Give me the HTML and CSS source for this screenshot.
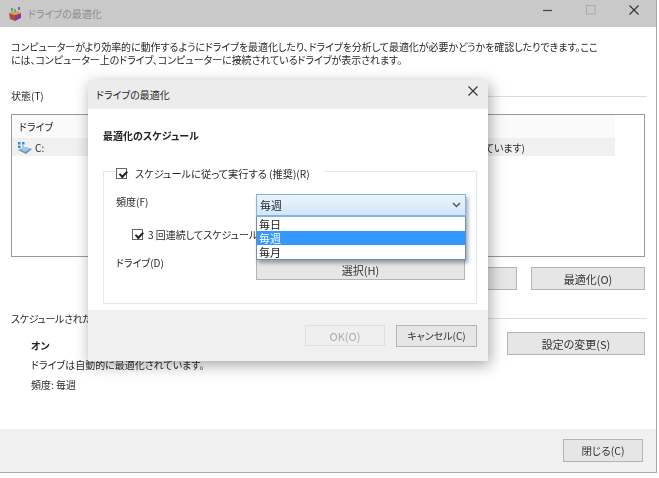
FILE: index.html
```html
<!DOCTYPE html>
<html lang="ja">
<head>
<meta charset="utf-8">
<title>ドライブの最適化</title>
<link rel="stylesheet" href="styles.css">
</head>
<body>
<div class="screen">
  <div class="window">
    <header class="titlebar">
      <svg class="app-icon" width="14" height="14" viewBox="0 0 14 14">
        <path d="M1 6l6 2v6l-5-2z" fill="#b5473c"/>
        <path d="M7 8l6-2v5l-6 3z" fill="#7a3f9a"/>
        <path d="M1 6l3-2 3 1 3-1 3 2-6 2z" fill="#d9a441"/>
        <rect x="3" y="1" width="2" height="3" fill="#4f9bd9"/>
        <rect x="6" y="2" width="2" height="3" fill="#6cb65a"/>
        <rect x="10" y="0" width="2" height="3" fill="#8a5cc0"/>
      </svg>
      <span class="title-text">ドライブの最適化</span>
      <div class="win-controls">
        <svg width="10" height="10" viewBox="0 0 10 10"><path d="M0 5.5h9" stroke="#444" stroke-width="1.2"/></svg>
        <svg width="10" height="10" viewBox="0 0 10 10"><rect x=".5" y=".5" width="8.5" height="8.5" fill="none" stroke="#aaa"/></svg>
        <svg width="10" height="10" viewBox="0 0 10 10"><path d="M.5.5l9 9M9.5.5l-9 9" stroke="#333" stroke-width="1.1"/></svg>
      </div>
    </header>
    <main class="content">
      <p class="intro">コンピューターがより効率的に動作するようにドライブを最適化したり、ドライブを分析して最適化が必要かどうかを確認したりできます。ここには、コンピューター上のドライブ、コンピューターに接続されているドライブが表示されます。</p>
      <div class="section-head status-head"><span>状態(T)</span><i class="rule"></i></div>
      <div class="listbox">
        <div class="list-row list-header"><span class="cell-name">ドライブ</span></div>
        <div class="list-row list-selected">
          <span class="cell-name drive-cell">
            <svg width="16" height="14" viewBox="0 0 16 14">
              <path d="M1 9l7-3 7 2-6 5z" fill="#6f94b8"/>
              <path d="M3 8l5-2 5 2-5 3z" fill="#a9c6df"/>
              <rect x="1" y="1" width="2.5" height="2.5" fill="#2f8fd8"/>
              <rect x="5" y="1" width="2.5" height="2.5" fill="#2f8fd8"/>
              <rect x="1" y="4.5" width="2.5" height="2.5" fill="#2f8fd8"/>
              <rect x="5" y="4.5" width="2" height="2" fill="#8ec3ea"/>
            </svg>
            C:
          </span>
          <span class="cell-status">OK (断片化 0% となっています)</span>
        </div>
      </div>
      <div class="button-row">
        <button class="btn btn-analyze" type="button">分析(A)</button>
        <button class="btn btn-optimize" type="button">最適化(O)</button>
      </div>
      <div class="section-head schedule-head"><span>スケジュールされた最適化</span><i class="rule"></i></div>
      <div class="schedule">
        <div class="schedule-info">
          <strong>オン</strong>
          <span>ドライブは自動的に最適化されています。</span>
          <span>頻度: 毎週</span>
        </div>
        <button class="btn btn-settings" type="button">設定の変更(S)</button>
      </div>
    </main>
    <footer class="footer">
      <button class="btn btn-close" type="button">閉じる(C)</button>
    </footer>
  </div>

  <section class="dialog">
    <header class="dialog-title">
      <span>ドライブの最適化</span>
      <svg width="10" height="10" viewBox="0 0 10 10"><path d="M.5.5l9 9M9.5.5l-9 9" stroke="#333" stroke-width="1.1"/></svg>
    </header>
    <div class="dialog-body">
      <h2 class="dialog-heading">最適化のスケジュール</h2>
      <div class="group">
        <label class="legend"><span class="check"></span>スケジュールに従って実行する (推奨)(R)</label>
        <div class="field-row freq-row"><span>頻度(F)</span></div>
        <label class="notify"><span class="check"></span>3 回連続してスケジュール</label>
        <div class="field-row drive-row"><span class="drive-label">ドライブ(D)</span><button class="btn btn-choose" type="button">選択(H)</button></div>
        <div class="select">
          <div class="select-box">毎週
            <svg width="9" height="6" viewBox="0 0 9 6"><path d="M1 1l3.5 3.5L8 1" fill="none" stroke="#556" stroke-width="1.5"/></svg>
          </div>
          <ul class="select-list">
            <li>毎日</li>
            <li class="active">毎週</li>
            <li>毎月</li>
          </ul>
        </div>
      </div>
    </div>
    <footer class="dialog-footer">
      <button class="btn btn-ok" type="button" disabled>OK(O)</button>
      <button class="btn btn-cancel" type="button">キャンセル(C)</button>
    </footer>
  </section>
</div>
</body>
</html>
```
FILE: styles.css
```css
* { box-sizing: border-box; }
html, body { margin: 0; padding: 0; background: #fff; }
body {
  width: 659px;
  height: 478px;
  overflow: hidden;
  font-family: "Noto Sans CJK JP", "Noto Sans", sans-serif;
  font-size: 10px;
  color: #282828;
  font-feature-settings: "palt";
}
.screen {
  position: relative;
  width: 659px;
  height: 478px;
  overflow: hidden;
  filter: blur(0.45px);
}
.window {
  display: flex;
  flex-direction: column;
  width: 657px;
  height: 473px;
  border-right: 1px solid #a8a8a8;
  border-bottom: 1px solid #a8a8a8;
}
.titlebar {
  display: flex;
  align-items: center;
  height: 27px;
  padding: 0 0 0 8px;
  background: #c9c9c9;
  flex: none;
}
.app-icon { flex: none; margin-right: 6px; }
.title-text { color: #8d8d8d; margin-top: -1px; }
.win-controls {
  margin-left: auto;
  display: flex;
  align-items: center;
  gap: 33px;
  padding-right: 17px;
  margin-top: -8px;
}
.content {
  flex: 1;
  display: flex;
  flex-direction: column;
  padding: 13px 9px 0 11px;
  min-height: 0;
}
.intro {
  margin: 0;
  width: 590px;
  line-height: 13px;
  letter-spacing: -0.05px;
}
.section-head {
  display: flex;
  align-items: center;
  gap: 6px;
}
.rule { flex: 1; height: 1px; background: #dcdcdc; margin-top: 3px; }
.status-head { margin-top: 22px; height: 14px; }
.status-head .rule { margin-left: 60px; }
.listbox {
  margin-top: 12px;
  margin-right: 2px;
  height: 143px;
  border: 1px solid #9a9a9a;
  flex: none;
}
.list-row {
  position: relative;
  display: flex;
  align-items: center;
  width: 603px;
}
.list-header { height: 23px; background: #fafafa; }
.list-selected { height: 18px; background: #f0f0f0; }
.cell-name { padding-left: 7px; }
.drive-cell { display: flex; align-items: center; gap: 2px; padding-left: 5px; padding-top: 1px; }
.cell-status { margin-left: auto; padding-right: 90px; padding-top: 1px; }
.btn {
  font: inherit;
  font-size: 11px;
  color: #333;
  background: #e6e6e6;
  border: 1px solid #b4b4b4;
  padding: 0;
  height: 23px;
}
.button-row {
  display: flex;
  justify-content: flex-end;
  gap: 14px;
  margin-top: 10px;
  padding-right: 2px;
}
.btn-analyze { width: 114px; }
.btn-optimize { width: 114px; }
.schedule-head { margin-top: 21px; height: 14px; letter-spacing: -0.35px; }
.schedule-head .rule { margin-top: 1px; }
.schedule {
  display: flex;
  align-items: flex-start;
  justify-content: space-between;
  padding-right: 2px;
}
.schedule-info {
  display: flex;
  flex-direction: column;
  padding: 14px 0 0 20px;
  line-height: 13px;
  gap: 7px;
}
.schedule-info strong { font-weight: 700; color: #222; margin-bottom: -1px; }
.btn-settings { width: 138px; margin-top: 7px; }
.footer {
  flex: none;
  height: 43px;
  display: flex;
  align-items: center;
  justify-content: flex-end;
  padding-right: 13px;
  background: #f0f0f0;
}
.btn-close { width: 80px; font-size: 10.5px; }

.dialog {
  position: absolute;
  left: 88px;
  top: 80px;
  width: 400px;
  height: 281px;
  display: flex;
  flex-direction: column;
  background: #fff;
  box-shadow: 2px 4px 14px rgba(0, 0, 0, .35);
}
.dialog-title {
  flex: none;
  height: 29px;
  display: flex;
  align-items: center;
  justify-content: space-between;
  padding: 0 10px 0 8px;
  background: #ececec;
}
.dialog-title svg { margin-top: -8px; }
.dialog-body {
  flex: 1;
  padding: 19px 11px 0 15px;
}
.dialog-heading {
  margin: 0;
  font-size: 10px;
  line-height: 16px;
  font-weight: 700;
  color: #222;
}
.group {
  position: relative;
  margin-top: 27px;
  height: 133px;
  border: 1px solid #e6e6e6;
  padding-top: 21px;
}
.check {
  display: inline-block;
  flex: none;
  width: 11px;
  height: 11px;
  border: 1px solid #666;
  background: #fff;
  position: relative;
}
.check::after {
  content: "";
  position: absolute;
  left: 2px;
  top: 1px;
  width: 6px;
  height: 3px;
  border-left: 2px solid #222;
  border-bottom: 2px solid #222;
  transform: rotate(-45deg) translate(-0.5px, 1px);
}
.legend {
  position: absolute;
  left: 12px;
  top: -5px;
  display: flex;
  align-items: center;
  gap: 8px;
  padding-right: 14px;
  background: #fff;
  height: 13px;
  font-size: 10.2px;
}
.field-row {
  display: flex;
  align-items: center;
  padding-left: 12px;
}
.freq-row { height: 16px; }
.notify {
  display: flex;
  align-items: center;
  gap: 5px;
  margin: 19px 0 0 28px;
  height: 13px;
  white-space: nowrap;
}
.drive-row {
  justify-content: space-between;
  align-items: flex-start;
  margin-top: 11px;
  padding-right: 11px;
}
.drive-label { margin-top: 3px; }
.btn-choose { width: 209px; height: 21px; margin-top: 7px; }
.select {
  position: absolute;
  left: 152px;
  top: 22px;
  width: 210px;
  box-shadow: 2px 3px 4px rgba(40, 60, 80, .45);
}
.select-box {
  height: 22px;
  display: flex;
  align-items: center;
  justify-content: space-between;
  padding: 0 4px 1px 3px;
  border: 1px solid #7eb4ea;
  background: linear-gradient(#ebf4fc, #d0e6fa);
  font-size: 11px;
}
.select-list {
  list-style: none;
  margin: 0;
  padding: 0;
  height: 44px;
  background: #fff;
  border: 1px solid #6f8fa8;
  border-top: 1px solid #7eb4ea;
  font-size: 11px;
}
.select-list li {
  height: 14px;
  line-height: 14px;
  padding-left: 2px;
  color: #222;
}
.select-list li.active { background: #3399ff; color: #fff; }
.dialog-footer {
  flex: none;
  height: 51px;
  display: flex;
  justify-content: flex-end;
  align-items: center;
  gap: 11px;
  padding: 0 11px 0 0;
  background: #f0f0f0;
}
.btn-ok {
  width: 80px;
  height: 21px;
  color: #aaa;
  background: #efefef;
  border-color: #e0e0e0;
}
.btn-cancel { width: 81px; height: 22px; font-size: 10px; }
```
